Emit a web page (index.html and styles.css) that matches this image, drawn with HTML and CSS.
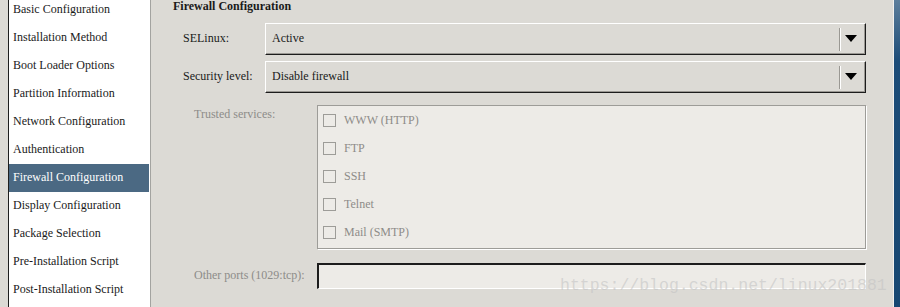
FILE: index.html
```html
<!DOCTYPE html>
<html lang="en">
<head>
    <meta charset="UTF-8">
    <title>Kickstart Configurator - Firewall Configuration</title>
    <link rel="stylesheet" href="styles.css">
</head>
<body>
    <div class="gutter"></div>
    <ul class="nav">
        <li>Basic Configuration</li>
        <li>Installation Method</li>
        <li>Boot Loader Options</li>
        <li>Partition Information</li>
        <li>Network Configuration</li>
        <li>Authentication</li>
        <li class="selected">Firewall Configuration</li>
        <li>Display Configuration</li>
        <li>Package Selection</li>
        <li>Pre-Installation Script</li>
        <li>Post-Installation Script</li>
    </ul>

    <div class="main">
        <h2>Firewall Configuration</h2>

        <div class="row">
            <span class="label">SELinux:</span>
            <div class="combo">
                <span class="combo-text">Active</span>
                <span class="combo-sep"></span>
                <span class="combo-arrow"></span>
            </div>
        </div>

        <div class="row">
            <span class="label">Security level:</span>
            <div class="combo">
                <span class="combo-text">Disable firewall</span>
                <span class="combo-sep"></span>
                <span class="combo-arrow"></span>
            </div>
        </div>

        <div class="row row-services">
            <span class="label label-off">Trusted services:</span>
            <div class="services">
                <label class="check"><span class="box"></span>WWW (HTTP)</label>
                <label class="check"><span class="box"></span>FTP</label>
                <label class="check"><span class="box"></span>SSH</label>
                <label class="check"><span class="box"></span>Telnet</label>
                <label class="check"><span class="box"></span>Mail (SMTP)</label>
            </div>
        </div>

        <div class="row row-ports">
            <span class="label label-off">Other ports (1029:tcp):</span>
            <div class="entry"></div>
        </div>

        <div class="watermark">https://blog.csdn.net/linux201881</div>
    </div>

    <div class="scrollbar"></div>
</body>
</html>
```

FILE: styles.css
```css
body {
    margin: 0;
    height: 307px;
    overflow: hidden;
    display: flex;
    background-color: #dcdad5;
    font-family: 'Liberation Serif', serif;
    font-size: 12px;
    color: #1a1a1a;
}

.gutter {
    width: 8px;
    flex-shrink: 0;
}

.nav {
    list-style: none;
    margin: 0;
    padding: 0 1px 0 0;
    width: 140px;
    flex-shrink: 0;
    background-color: #fff;
    border-left: 1px solid #1e1e1e;
    border-right: 1px solid #a3a3a0;
    overflow: hidden;
}

.nav li {
    height: 28px;
    line-height: 26px;
    padding: 0 0 2px 4px;
    box-sizing: border-box;
    white-space: nowrap;
}

.nav li:first-child {
    margin-top: -4px;
}

.nav li.selected {
    background-color: #4b6983;
    color: #fff;
}

.main {
    position: relative;
    flex-grow: 1;
    padding: 0 27px 0 32px;
    border-right: 1px solid #f2f1ef;
}

h2 {
    margin: -1px 0 10px -10px;
    font-size: 12px;
    font-weight: 700;
    line-height: 14px;
}

.row {
    display: flex;
    align-items: center;
    margin-bottom: 6px;
}

.label {
    width: 82px;
    flex-shrink: 0;
    padding-bottom: 2px;
    white-space: nowrap;
}

.label-off {
    color: #8d8c89;
    padding-left: 11px;
    width: 123px;
}

.combo {
    flex-grow: 1;
    height: 30px;
    display: flex;
    align-items: center;
    border: 1px solid;
    border-color: #fff #1c1c1c #1c1c1c #fff;
    box-shadow: inset -1px -1px 0 #9a9893;
}

.combo-text {
    flex-grow: 1;
    padding: 0 0 2px 6px;
}

.combo-sep {
    width: 1px;
    height: 23px;
    background-color: #9a9893;
    border-right: 1px solid #fff;
}

.combo-arrow {
    width: 0;
    height: 0;
    margin: 0 8px 1px 4px;
    border-left: 6px solid transparent;
    border-right: 6px solid transparent;
    border-top: 7px solid #000;
}

.row-services {
    align-items: flex-start;
    margin-top: 12px;
    margin-bottom: 14px;
}

.row-services .label {
    margin-top: 2px;
}

.services {
    flex-grow: 1;
    height: 141px;
    padding-top: 1px;
    background-color: #edebe7;
    border: 1px solid #9d9c98;
    box-shadow: 1px 1px 0 #fff;
    display: flex;
    flex-direction: column;
}

.check {
    height: 28px;
    box-sizing: border-box;
    display: flex;
    align-items: center;
    padding: 0 0 2px 5px;
    color: #8d8c89;
}

.box {
    width: 11px;
    height: 11px;
    margin-right: 8px;
    border: 1px solid #9d9c98;
    background-color: #edebe7;
}

.entry {
    flex-grow: 1;
    height: 23px;
    background-color: #edebe7;
    border: 1px solid;
    border-width: 2px 1px 1px 2px;
    border-color: #1c1c1c #fff #fff #1c1c1c;
}

.row-ports .label {
    width: 123px;
}

.scrollbar {
    width: 6px;
    flex-shrink: 0;
    background: linear-gradient(#5d7e9c, #1c4c78 20%, #174772);
}

.watermark {
    position: absolute;
    left: 409px;
    top: 276px;
    font-family: 'Liberation Mono', monospace;
    font-size: 16.5px;
    line-height: 20px;
    color: rgba(196, 196, 196, 0.6);
    white-space: nowrap;
}
```
